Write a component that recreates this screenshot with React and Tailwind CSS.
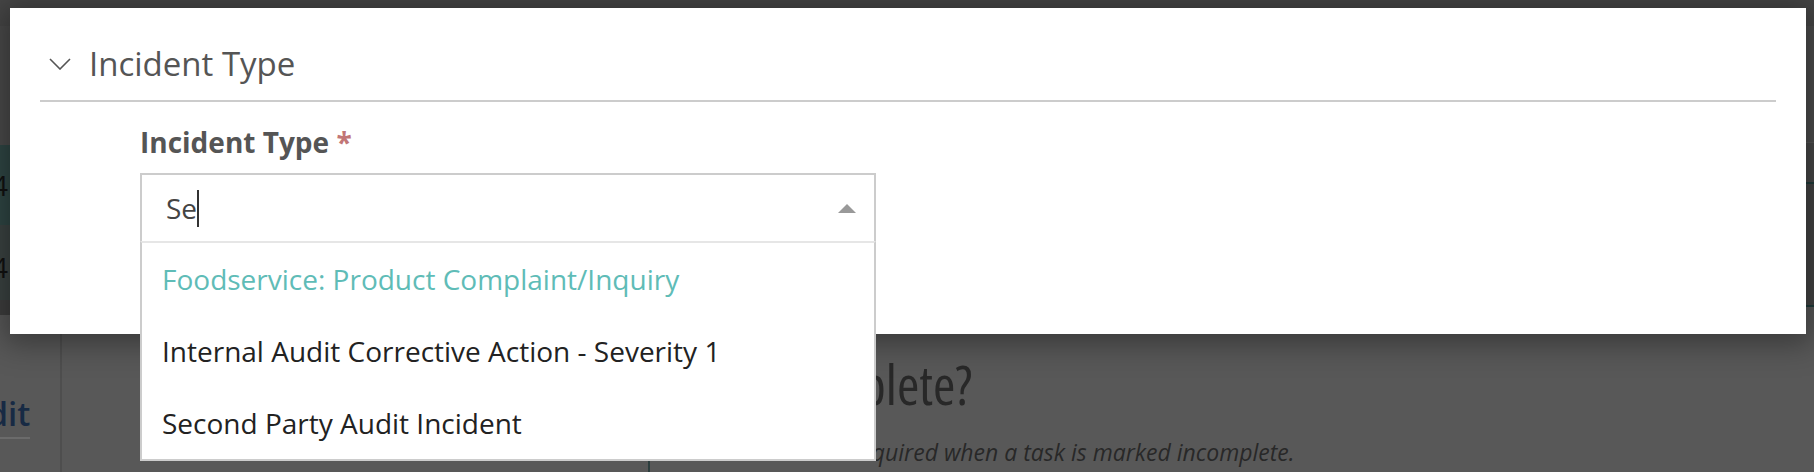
import React from 'react';

// Incident form modal with an open type-ahead dropdown, over a dimmed page.
const options = [
  { id: 1, label: 'Foodservice: Product Complaint/Inquiry', active: true },
  { id: 2, label: 'Internal Audit Corrective Action - Severity 1' },
  { id: 3, label: 'Second Party Audit Incident' },
];

const App = () => {
  return (
    <div className="relative w-[1814px] h-[472px] overflow-hidden bg-[#585858] font-['Open_Sans',sans-serif]">
      {/* page behind the overlay, already dimmed */}
      <div className="flex flex-col h-full">
        <div className="h-[26px] shrink-0 bg-[#464646]" />
        <div className="flex flex-1">
          <div className="w-[62px] shrink-0 flex flex-col border-r-2 border-[#4e4e4e]">
            <div className="h-[119px] bg-[#4a4a4a]" />
            <div className="h-[80px] flex items-center bg-[#2f4644] overflow-hidden">
              <span className="-ml-[8px] text-[28px] text-[#111]">4</span>
            </div>
            <div className="h-[75px] flex items-center pt-[8px] bg-[#3b4342] overflow-hidden">
              <span className="-ml-[8px] text-[28px] text-[#111]">4</span>
            </div>
            <div className="h-[15px] bg-[#3e3e3e]" />
            <div className="mt-[76px] overflow-hidden">
              <span className="inline-block -ml-[31px] text-[33px] leading-[46px] font-semibold text-[#172a44] border-b-2 border-[#6b6b6b]">
                Edit
              </span>
            </div>
          </div>
          <div className="w-[588px] shrink-0 border-r-2 border-[#2c3e3e] bg-[#585858]" />
          <div className="flex-1 flex flex-col">
            <div className="h-[117px] bg-[#4c4c4c] border-b border-[#555]" />
            <div className="h-[41px] bg-[#474747] border-b-2 border-[#1f3b3a]" />
            <div className="h-[123px] bg-[#434343] border-b-2 border-[#1f3b3a]" />
            <div className="pt-[41px] pl-[60px] text-[#282828]">
              <h3 className="ml-[36px] text-[54px] leading-[72px] font-stretch-75%">Incomplete?</h3>
              <p className="mt-[17px] ml-[25px] text-[23px] leading-[31px] italic">
                A reason is required when a task is marked incomplete.
              </p>
            </div>
          </div>
        </div>
      </div>

      {/* modal */}
      <div className="absolute left-[10px] top-[8px] w-[1796px] h-[326px] bg-white shadow-[0_4px_28px_6px_rgba(0,0,0,0.35)]">
        <div className="mx-[30px] pt-[33px] pb-[14px] flex items-center border-b-2 border-[#cccccc]">
          <svg className="ml-[9px]" width="22" height="12" viewBox="0 0 22 12" fill="none">
            <polyline points="1,1 11,11 21,1" stroke="#555" strokeWidth="1.6" />
          </svg>
          <h2 className="ml-[18px] text-[33px] leading-[45px] text-[#555]">Incident Type</h2>
        </div>

        <div className="pl-[130px] pt-[21px]">
          <label className="block text-[28px] leading-[38px] font-bold text-[#555]">
            Incident Type <span className="text-[#c27676]">*</span>
          </label>
          <div className="relative mt-[12px] w-[736px]">
            <div className="h-[68px] flex items-center pl-[24px] pr-[18px] border-2 border-b-0 border-[#cccccc] bg-white">
              <span className="text-[28px] text-[#444]">Se</span>
              <span className="w-[2px] h-[37px] bg-[#333]" />
              <svg className="ml-auto" width="18" height="9" viewBox="0 0 18 9">
                <polygon points="9,0 18,9 0,9" fill="#999" />
              </svg>
            </div>
            <ul className="absolute left-0 right-0 top-full bg-white border-2 border-[#cccccc] border-t-[#e6e6e6]">
              {options.map(o => (
                <li
                  key={o.id}
                  className={
                    o.active
                      ? 'h-[72px] flex items-center px-[20px] text-[28px] text-[#5fbcb7]'
                      : 'h-[72px] flex items-center px-[20px] text-[28px] text-[#222]'
                  }
                >
                  {o.label}
                </li>
              ))}
            </ul>
          </div>
        </div>
      </div>
    </div>
  );
};

export default App;
